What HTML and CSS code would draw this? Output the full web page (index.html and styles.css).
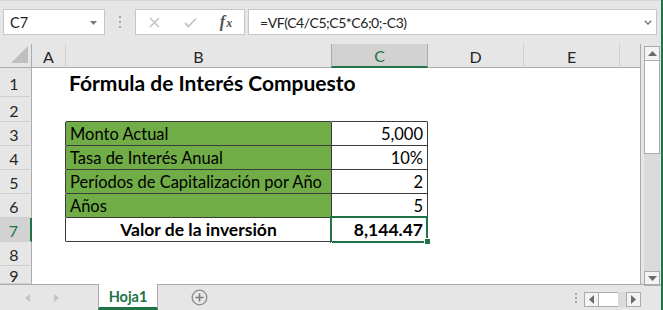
FILE: index.html
```html
<!DOCTYPE html>
<html lang="es">
<head>
<meta charset="utf-8">
<title>Fórmula de Interés Compuesto</title>
<link rel="stylesheet" href="styles.css">
</head>
<body>
<div class="app">
  <div class="fbar">
    <div class="namebox">
      <span class="nb-text">C7</span>
      <svg class="nb-caret" width="7" height="4" viewBox="0 0 7 4"><polygon points="0,0 7,0 3.5,4" fill="#7a7a7a"/></svg>
    </div>
    <div class="grip"><i></i><i></i><i></i></div>
    <div class="fbtns">
      <span class="fbtn"><svg width="11" height="11" viewBox="0 0 11 11"><path d="M1 1 L10 10 M10 1 L1 10" stroke="#c4c4c4" stroke-width="1.6" fill="none"/></svg></span>
      <span class="fbtn"><svg width="13" height="11" viewBox="0 0 13 11"><path d="M1 6 L4.5 9.5 L12 1.5" stroke="#c4c4c4" stroke-width="1.8" fill="none"/></svg></span>
      <span class="fbtn fx"><i>f</i><em>x</em></span>
    </div>
    <div class="finput">
      <span class="ftext">=VF(C4/C5;C5*C6;0;-C3)</span>
      <svg class="fchev" width="8" height="5" viewBox="0 0 8 5"><path d="M0.8 0.8 L4 4 L7.2 0.8" stroke="#7a7a7a" stroke-width="1.5" fill="none"/></svg>
    </div>
  </div>

  <div class="main">
    <div class="sheet">
      <div class="row hdr">
        <div class="rh corner"><svg width="17" height="17" viewBox="0 0 17 17"><polygon points="17,0 17,17 0,17" fill="#bfbfbf"/></svg></div>
        <div class="ch ca">A</div>
        <div class="ch cb">B</div>
        <div class="ch cc sel">C</div>
        <div class="ch cd">D</div>
        <div class="ch ce">E</div>
        <div class="ch cf"></div>
      </div>
      <div class="row r1">
        <div class="rh">1</div>
        <div class="cell ca"></div>
        <div class="cell cb title">Fórmula de Interés Compuesto</div>
        <div class="cell cc"></div>
        <div class="cell cd"></div>
        <div class="cell ce"></div>
        <div class="cell cf"></div>
      </div>
      <div class="row r2">
        <div class="rh">2</div>
        <div class="cell ca"></div>
        <div class="cell cb tb-b"></div>
        <div class="cell cc tb-b"></div>
        <div class="cell cd"></div>
        <div class="cell ce"></div>
        <div class="cell cf"></div>
      </div>
      <div class="row">
        <div class="rh">3</div>
        <div class="cell ca tb-r"></div>
        <div class="cell cb tb green">Monto Actual</div>
        <div class="cell cc tb num">5,000</div>
        <div class="cell cd"></div>
        <div class="cell ce"></div>
        <div class="cell cf"></div>
      </div>
      <div class="row">
        <div class="rh">4</div>
        <div class="cell ca tb-r"></div>
        <div class="cell cb tb green">Tasa de Interés Anual</div>
        <div class="cell cc tb num">10%</div>
        <div class="cell cd"></div>
        <div class="cell ce"></div>
        <div class="cell cf"></div>
      </div>
      <div class="row">
        <div class="rh">5</div>
        <div class="cell ca tb-r"></div>
        <div class="cell cb tb green">Períodos de Capitalización por Año</div>
        <div class="cell cc tb num">2</div>
        <div class="cell cd"></div>
        <div class="cell ce"></div>
        <div class="cell cf"></div>
      </div>
      <div class="row">
        <div class="rh">6</div>
        <div class="cell ca tb-r"></div>
        <div class="cell cb tb green">Años</div>
        <div class="cell cc tb num">5</div>
        <div class="cell cd"></div>
        <div class="cell ce"></div>
        <div class="cell cf"></div>
      </div>
      <div class="row">
        <div class="rh rsel">7</div>
        <div class="cell ca tb-r"></div>
        <div class="cell cb tb center bold">Valor de la inversión</div>
        <div class="cell cc tb num bold active">8,144.47<span class="handle"></span></div>
        <div class="cell cd"></div>
        <div class="cell ce"></div>
        <div class="cell cf"></div>
      </div>
      <div class="row">
        <div class="rh">8</div>
        <div class="cell ca"></div>
        <div class="cell cb"></div>
        <div class="cell cc"></div>
        <div class="cell cd"></div>
        <div class="cell ce"></div>
        <div class="cell cf"></div>
      </div>
      <div class="row r9">
        <div class="rh">9</div>
        <div class="cell ca"></div>
        <div class="cell cb"></div>
        <div class="cell cc"></div>
        <div class="cell cd"></div>
        <div class="cell ce"></div>
        <div class="cell cf"></div>
      </div>
    </div>
    <div class="vscroll">
      <div class="vs-inner">
        <div class="sbtn vbtn"><svg width="9" height="5" viewBox="0 0 9 5"><polygon points="4.5,0 9,5 0,5" fill="#6b6b6b"/></svg></div>
        <div class="vthumb"></div>
        <div class="vtrack"></div>
        <div class="sbtn vbtn"><svg width="9" height="5" viewBox="0 0 9 5"><polygon points="0,0 9,0 4.5,5" fill="#6b6b6b"/></svg></div>
      </div>
    </div>
  </div>

  <div class="tabbar">
    <div class="tabnav">
      <svg width="5" height="8" viewBox="0 0 5 8"><polygon points="5,0 5,8 0,4" fill="#c4c4c4"/></svg>
      <svg width="5" height="8" viewBox="0 0 5 8"><polygon points="0,0 0,8 5,4" fill="#c4c4c4"/></svg>
    </div>
    <div class="tab">Hoja1</div>
    <div class="addsheet"><svg width="17" height="17" viewBox="0 0 17 17"><circle cx="8.5" cy="8.5" r="7.3" fill="none" stroke="#8a8a8a" stroke-width="1.3"/><path d="M8.5 4.5 V12.5 M4.5 8.5 H12.5" stroke="#7a7a7a" stroke-width="1.6"/></svg></div>
    <div class="spacer"></div>
    <div class="hgrip"><i></i><i></i><i></i></div>
    <div class="hscroll">
      <div class="sbtn hbtn"><svg width="5" height="9" viewBox="0 0 5 9"><polygon points="5,0 5,9 0,4.5" fill="#6b6b6b"/></svg></div>
      <div class="hthumb"></div>
      <div class="htrack"></div>
      <div class="sbtn hbtn"><svg width="5" height="9" viewBox="0 0 5 9"><polygon points="0,0 0,9 5,4.5" fill="#6b6b6b"/></svg></div>
    </div>
  </div>
</div>
</body>
</html>
```

FILE: styles.css
```css
* { box-sizing: border-box; }
html, body { margin: 0; padding: 0; }
body {
  width: 663px;
  height: 310px;
  overflow: hidden;
  background: #e6e6e6;
  font-family: "Lato", "Liberation Sans", sans-serif;
  color: #000;
}
.app {
  width: 663px;
  height: 310px;
  display: flex;
  flex-direction: column;
  border-right: 2px solid #217346;
  background: #e6e6e6;
}

/* formula bar */
.fbar {
  height: 44px;
  display: flex;
  align-items: flex-start;
  padding: 8px 0 0 3px;
  border-top: 1px solid #d8d8d8;
}
.fbar > div { height: 26px; }
.namebox {
  width: 102px;
  background: #fff;
  border: 1px solid #c6c6c6;
  display: flex;
  align-items: center;
  justify-content: space-between;
  padding: 0 7px 0 6px;
  font-size: 14.5px;
  color: #222;
}
.nb-caret { margin-top: 1px; }
.grip {
  width: 30px;
  display: flex;
  flex-direction: column;
  align-items: center;
  justify-content: center;
  gap: 3px;
}
.grip i, .hgrip i {
  display: block;
  width: 2px;
  height: 2px;
  background: #a6a6a6;
}
.fbtns {
  width: 110px;
  background: #fff;
  border: 1px solid #c6c6c6;
  display: flex;
}
.fbtn {
  width: 36px;
  display: flex;
  align-items: center;
  justify-content: center;
}
.fx {
  font-family: "Liberation Serif", serif;
  font-style: italic;
  color: #505050;
  font-size: 16px;
  font-weight: bold;
}
.fx i { font-style: italic; }
.fx em { font-style: italic; font-size: 12px; margin-left: 1px; margin-top: 3px; }
.finput {
  width: 409px;
  margin-left: 3px;
  background: #fff;
  border: 1px solid #c6c6c6;
  display: flex;
  align-items: center;
  justify-content: space-between;
  padding: 0 4px 0 11px;
  font-size: 14px;
  letter-spacing: -0.45px;
  color: #222;
}

/* sheet */
.main { display: flex; height: 240px; }
.sheet {
  width: 641px;
  background: #fff;
  border-right: 1px solid #ababab;
  display: flex;
  flex-direction: column;
}
.row { display: flex; height: 24px; flex: none; }
.row.hdr { background: #e6e6e6; }
.row.r1 { height: 29px; }
.row.r2 { height: 25px; }
.row.r9 { height: 18px; }

.ca { width: 34px; }
.cb { width: 266px; }
.cc { width: 96px; }
.cd { width: 96px; }
.ce { width: 96px; }
.cf { width: 20px; }

.rh {
  width: 32px;
  flex: none;
  background: #e6e6e6;
  border-right: 1px solid #ababab;
  border-bottom: 1px solid #cfcfcf;
  display: flex;
  align-items: center;
  justify-content: center;
  padding: 2px 3px 0 0;
  font-size: 16px;
  color: #262626;
}
.rh.rsel {
  background: #d2d2d2;
  border-right: 2px solid #217346;
  color: #217346;
}
.corner {
  border-bottom: 1px solid #ababab;
  align-items: flex-end;
  justify-content: flex-end;
  padding: 0 3px 4px 0;
}
.ch {
  flex: none;
  display: flex;
  align-items: center;
  justify-content: center;
  border-right: 1px solid #cfcfcf;
  border-bottom: 1px solid #ababab;
  font-size: 16px;
  color: #262626;
  padding-top: 1px;
}
.ch.cf { border-right: none; }
.ch.sel {
  background: #d2d2d2;
  color: #217346;
  border-bottom: 2px solid #217346;
  border-right-color: #ababab;
  border-left: 1px solid #ababab;
  margin-left: -1px;
  width: 97px;
}

.cell {
  flex: none;
  border-right: 1px solid #fff;
  border-bottom: 1px solid #fff;
  display: flex;
  align-items: flex-end;
  padding: 0 4px;
  font-size: 16.5px;
  line-height: 22px;
  white-space: nowrap;
  position: relative;
}
.cell.cf { border-right: none; }
.title {
  font-size: 21px;
  font-weight: bold;
  line-height: 26px;
  padding-left: 3px;
}
.tb { border-right-color: #3c3c3c; border-bottom-color: #3c3c3c; }
.tb-b { border-bottom-color: #3c3c3c; }
.tb-r { border-right-color: #3c3c3c; }
.green { background: #70ad47; }
.num { justify-content: flex-end; }
.center { justify-content: center; }
.bold { font-weight: bold; font-size: 17.5px; }
.active::after {
  content: "";
  position: absolute;
  left: -2px;
  top: -2px;
  right: -1px;
  bottom: -2px;
  border: 2px solid #217346;
  pointer-events: none;
}
.handle {
  position: absolute;
  right: -4px;
  bottom: -4px;
  width: 7px;
  height: 7px;
  background: #217346;
  border: 1px solid #fff;
  z-index: 2;
}

/* vertical scrollbar */
.vscroll {
  width: 20px;
  padding: 2px 1px 0 3px;
}
.vs-inner {
  height: 240px;
  display: flex;
  flex-direction: column;
  background: #dadada;
}
.sbtn {
  background: #f3f3f3;
  border: 1px solid #ababab;
  display: flex;
  align-items: center;
  justify-content: center;
  flex: none;
}
.vbtn { height: 15px; }
.vthumb {
  height: 93px;
  background: #fff;
  border: 1px solid #ababab;
  border-top: none;
}
.vtrack { flex: 1; }

/* tab bar */
.tabbar {
  height: 26px;
  border-top: 1px solid #ababab;
  display: flex;
  align-items: stretch;
}
.tabnav {
  width: 98px;
  display: flex;
  align-items: center;
  padding-left: 25px;
  gap: 24px;
}
.tab {
  width: 60px;
  background: #fff;
  border-left: 1px solid #ababab;
  border-right: 1px solid #ababab;
  border-bottom: 3px solid #217346;
  margin-top: -1px;
  display: flex;
  align-items: center;
  justify-content: center;
  font-family: "Lato", "Liberation Sans", sans-serif;
  font-weight: bold;
  font-size: 14.5px;
  color: #217346;
  padding-top: 2px;
}
.addsheet {
  margin-left: 33px;
  display: flex;
  align-items: center;
}
.spacer { flex: 1; }
.hgrip {
  width: 16px;
  display: flex;
  flex-direction: column;
  align-items: center;
  justify-content: center;
  gap: 2px;
}
.hscroll {
  display: flex;
  align-items: flex-start;
  padding-top: 7px;
  margin-right: 20px;
}
.hbtn { width: 15px; height: 15px; }
.hthumb { width: 19px; height: 15px; background: #fff; border: 1px solid #ababab; border-left: none; border-right: none; }
.htrack { width: 8px; height: 15px; background: #dadada; }
```
